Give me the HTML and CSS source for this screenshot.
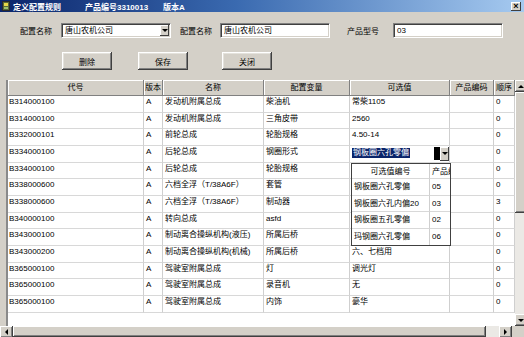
FILE: index.html
```html
<!DOCTYPE html>
<html lang="zh-CN">
<head>
  <meta charset="UTF-8">
  <title>定义配置规则</title>
  <link rel="stylesheet" href="styles.css">
</head>
<body>
  <div class="window">
    <!-- タイトルバー -->
    <div class="titlebar">
      <svg class="app-icon" width="8" height="10" viewBox="0 0 8 10">
        <rect x="0.5" y="0.5" width="7" height="9" fill="#5a6a3a" stroke="#2a2a2a"/>
        <rect x="2" y="2" width="4" height="3" fill="#e8d84a"/>
        <rect x="2" y="6" width="4" height="2" fill="#9fc46a"/>
      </svg>
      <span class="title-main">定义配置规则</span>
      <span class="title-code">产品编号3310013</span>
      <span class="title-ver">版本A</span>
      <span class="close-btn">×</span>
    </div>

    <!-- 条件入力 -->
    <div class="form-row">
      <span class="label">配置名称</span>
      <div class="combo">
        <span class="combo-text">唐山农机公司</span>
        <span class="drop-btn"><i class="arrow-down"></i></span>
      </div>
      <span class="label label-2">配置名称</span>
      <div class="textbox tb-name">唐山农机公司</div>
      <span class="label label-3">产品型号</span>
      <div class="textbox">03</div>
    </div>

    <div class="button-row">
      <button class="btn">删除</button>
      <button class="btn btn-save">保存</button>
      <button class="btn btn-close">关闭</button>
    </div>

    <!-- 一覧 -->
    <div class="grid">
      <div class="grid-body">
        <div class="row head">
          <span class="sel"></span><span>代号</span><span>版本</span><span>名称</span><span>配置变量</span><span>可选值</span><span>产品编码</span><span>顺序</span>
        </div>
        <div class="row"><span class="sel"></span><span>B314000100</span><span>A</span><span>发动机附属总成</span><span>柴油机</span><span>常柴1105</span><span></span><span>0</span></div>
        <div class="row"><span class="sel"></span><span>B314000100</span><span>A</span><span>发动机附属总成</span><span>三角皮带</span><span>2560</span><span></span><span>0</span></div>
        <div class="row"><span class="sel"></span><span>B332000101</span><span>A</span><span>前轮总成</span><span>轮胎规格</span><span>4.50-14</span><span></span><span>0</span></div>
        <div class="row"><span class="sel"></span><span>B334000100</span><span>A</span><span>后轮总成</span><span>钢圈形式</span>
          <span class="cell-combo"><em class="picked">钢板圈六孔零偏</em><b class="caret"></b><i class="cell-drop"><i class="arrow-down"></i></i></span>
          <span></span><span>0</span></div>
        <div class="row"><span class="sel"></span><span>B334000100</span><span>A</span><span>后轮总成</span><span>轮胎规格</span><span></span><span></span><span>0</span></div>
        <div class="row"><span class="sel"></span><span>B338000600</span><span>A</span><span>六档全浮（T/38A6F）</span><span>套管</span><span></span><span></span><span>0</span></div>
        <div class="row"><span class="sel"></span><span>B338000600</span><span>A</span><span>六档全浮（T/38A6F）</span><span>制动器</span><span></span><span></span><span>3</span></div>
        <div class="row"><span class="sel"></span><span>B340000100</span><span>A</span><span>转向总成</span><span>asfd</span><span></span><span></span><span>0</span></div>
        <div class="row"><span class="sel"></span><span>B343000100</span><span>A</span><span>制动离合操纵机构(液压)</span><span>所属后桥</span><span></span><span></span><span>0</span></div>
        <div class="row"><span class="sel"></span><span>B343000200</span><span>A</span><span>制动离合操纵机构(机械)</span><span>所属后桥</span><span>六、七档用</span><span></span><span>0</span></div>
        <div class="row"><span class="sel"></span><span>B365000100</span><span>A</span><span>驾驶室附属总成</span><span>灯</span><span>调光灯</span><span></span><span>0</span></div>
        <div class="row"><span class="sel"></span><span>B365000100</span><span>A</span><span>驾驶室附属总成</span><span>录音机</span><span>无</span><span></span><span>0</span></div>
        <div class="row"><span class="sel"></span><span>B365000100</span><span>A</span><span>驾驶室附属总成</span><span>内饰</span><span>豪华</span><span></span><span>0</span></div>

        <!-- 可选值のドロップダウン -->
        <div class="dropdown">
          <div class="dd-row dd-head"><span>可选值编号</span><span>产品编码</span></div>
          <div class="dd-row"><span>钢板圈六孔零偏</span><span>05</span></div>
          <div class="dd-row"><span>钢板圈六孔内偏20</span><span>03</span></div>
          <div class="dd-row"><span>钢板圈五孔零偏</span><span>02</span></div>
          <div class="dd-row"><span>玛钢圈六孔零偏</span><span>06</span></div>
        </div>
      </div>
      <div class="vscroll">
        <span class="sb-btn"><i class="arrow-up"></i></span>
        <span class="sb-thumb v-thumb"></span>
        <span class="sb-track"></span>
        <span class="sb-btn"><i class="arrow-down"></i></span>
      </div>
    </div>
    <div class="hscroll">
      <span class="sb-btn h-btn"><i class="arrow-left"></i></span>
      <span class="sb-thumb h-thumb"></span>
      <span class="sb-track"></span>
      <span class="sb-btn h-btn"><i class="arrow-right"></i></span>
      <span class="corner"></span>
    </div>
  </div>
</body>
</html>
```

FILE: styles.css
```css
* {
  box-sizing: border-box;
  margin: 0;
  padding: 0;
}
body {
  font-family: "Liberation Sans", "Noto Sans CJK SC", sans-serif;
  font-size: 8px;
  color: #000;
  background: #d4d0c8;
}
.window {
  width: 524px;
  height: 337px;
  overflow: hidden;
  background: #d4d0c8;
}

/* タイトルバー */
.titlebar {
  height: 12px;
  display: flex;
  align-items: center;
  background: linear-gradient(to right, #0a246a, #3a6ab0 45%, #a6caf0);
  color: #fff;
  font-weight: bold;
  padding-left: 2px;
  white-space: nowrap;
}
.app-icon {
  flex-shrink: 0;
}
.title-main {
  margin-left: 3px;
  width: 72px;
}
.title-code {
  width: 78px;
}
.close-btn {
  margin-left: auto;
  margin-right: 3px;
  width: 10px;
  height: 9px;
  background: #d4d0c8;
  color: #000;
  font-size: 9px;
  line-height: 8px;
  text-align: center;
  box-shadow: inset -1px -1px #404040, inset 1px 1px #fff;
}

/* 入力行 */
.form-row {
  display: flex;
  align-items: center;
  height: 15px;
  margin-top: 11px;
  padding-left: 20px;
}
.label {
  width: 41px;
  flex-shrink: 0;
}
.label-2 {
  margin-left: 9px;
  width: 40px;
}
.label-3 {
  margin-left: 17px;
  width: 46px;
}
.combo,
.textbox {
  width: 110px;
  height: 15px;
  flex-shrink: 0;
  background: #fff;
  border-top: 1px solid #808080;
  border-left: 1px solid #808080;
  border-right: 1px solid #fff;
  border-bottom: 1px solid #fff;
  box-shadow: inset 1px 1px #404040, inset -1px -1px #d4d0c8;
  padding-left: 3px;
  line-height: 13px;
  white-space: nowrap;
}
.combo {
  display: flex;
  align-items: center;
  padding-right: 1px;
}
.combo-text {
  flex: 1;
}
.drop-btn {
  width: 9px;
  height: 11px;
  display: flex;
  align-items: center;
  justify-content: center;
  background: #d4d0c8;
  box-shadow: inset -1px -1px #404040, inset 1px 1px #fff;
}

/* ボタン */
.button-row {
  display: flex;
  margin-top: 14px;
  padding-left: 62px;
}
.btn {
  width: 50px;
  height: 18px;
  font: inherit;
  color: #000;
  background: #d4d0c8;
  border: none;
  box-shadow: inset -1px -1px #404040, inset 1px 1px #fff, inset -2px -2px #808080, inset 2px 2px #e4e2dc;
}
.btn-save {
  margin-left: 26px;
}
.btn-close {
  margin-left: 34px;
}

/* 一覧 */
.grid {
  display: flex;
  height: 246px;
  margin-top: 10px;
}
.grid-body {
  position: relative;
  width: 515px;
  flex-shrink: 0;
  background: linear-gradient(to right, #d4d0c8 6px, #8a8a8a 6px, #8a8a8a 8px, #fff 8px);
}
.row {
  display: grid;
  grid-template-columns: 8px 136px 19px 101px 86px 100px 44px 21px;
  height: 16.667px;
}
.row > span {
  border-right: 1px solid #cfcfcf;
  border-bottom: 1px solid #d8d8d8;
  padding: 1px 0 0 2px;
  line-height: 10px;
  white-space: nowrap;
  overflow: hidden;
}
.row > span:nth-child(2) {
  padding-left: 1px;
}
.row > .sel {
  border: none;
}
.row.head {
  height: 16px;
}
.row.head > span {
  background: #d4d0c8;
  text-align: center;
  padding: 3px 0 0;
  border-right: 1px solid #808080;
  border-bottom: 1px solid #808080;
  box-shadow: inset 1px 1px #fff;
}
.row.head > .sel {
  background: transparent;
  box-shadow: none;
  border: none;
}

/* セル内コンボ */
.row > .cell-combo {
  display: flex;
  align-items: flex-start;
  padding: 2px 0 0 2px;
}
.picked {
  font-style: normal;
  background: #0a246a;
  color: #fff;
  line-height: 10px;
  padding: 0 1px;
}
.caret {
  margin-left: auto;
  width: 6px;
  height: 13px;
  margin-top: -1px;
  background: #000;
}
.cell-drop {
  width: 9px;
  height: 14px;
  margin-top: -1px;
  display: flex;
  align-items: center;
  justify-content: center;
  background: #d4d0c8;
  box-shadow: inset -1px -1px #404040, inset 1px 1px #fff;
}

/* ドロップダウン */
.dropdown {
  position: absolute;
  left: 351px;
  top: 83px;
  width: 100px;
  height: 83px;
  background: #fff;
  border: 1px solid #404040;
  overflow: hidden;
}
.dd-row {
  display: grid;
  grid-template-columns: 78px 40px;
  height: 16.667px;
}
.dd-row > span {
  border-right: 1px solid #cfcfcf;
  border-bottom: 1px solid #d8d8d8;
  padding: 3px 0 0 2px;
  line-height: 10px;
  white-space: nowrap;
  overflow: hidden;
}
.dd-row.dd-head {
  height: 15px;
}
.dd-head > span:first-child {
  text-align: center;
  padding-left: 0;
}

/* スクロールバー */
.vscroll {
  width: 12px;
  flex-shrink: 0;
  display: flex;
  flex-direction: column;
}
.sb-btn {
  width: 12px;
  height: 12px;
  flex-shrink: 0;
  display: flex;
  align-items: center;
  justify-content: center;
  background: #d4d0c8;
  box-shadow: inset -1px -1px #404040, inset 1px 1px #fff, inset -2px -2px #808080;
}
.sb-thumb {
  background: #d4d0c8;
  box-shadow: inset -1px -1px #404040, inset 1px 1px #fff, inset -2px -2px #808080;
}
.v-thumb {
  height: 121px;
}
.sb-track {
  flex: 1;
  background: #ebe9e5;
}
.hscroll {
  display: flex;
  height: 11px;
}
.h-btn {
  width: 13px;
  height: 12px;
}
.h-thumb {
  width: 476px;
}
.hscroll .sb-track {
  flex: none;
  width: 13px;
}
.corner {
  width: 12px;
  background: #d4d0c8;
}

/* 矢印 */
.arrow-down,
.arrow-up,
.arrow-left,
.arrow-right {
  display: block;
  width: 0;
  height: 0;
}
.arrow-down {
  border-left: 3px solid transparent;
  border-right: 3px solid transparent;
  border-top: 3px solid #000;
}
.arrow-up {
  border-left: 3px solid transparent;
  border-right: 3px solid transparent;
  border-bottom: 3px solid #000;
}
.arrow-left {
  border-top: 3px solid transparent;
  border-bottom: 3px solid transparent;
  border-right: 3px solid #000;
}
.arrow-right {
  border-top: 3px solid transparent;
  border-bottom: 3px solid transparent;
  border-left: 3px solid #000;
}
```
